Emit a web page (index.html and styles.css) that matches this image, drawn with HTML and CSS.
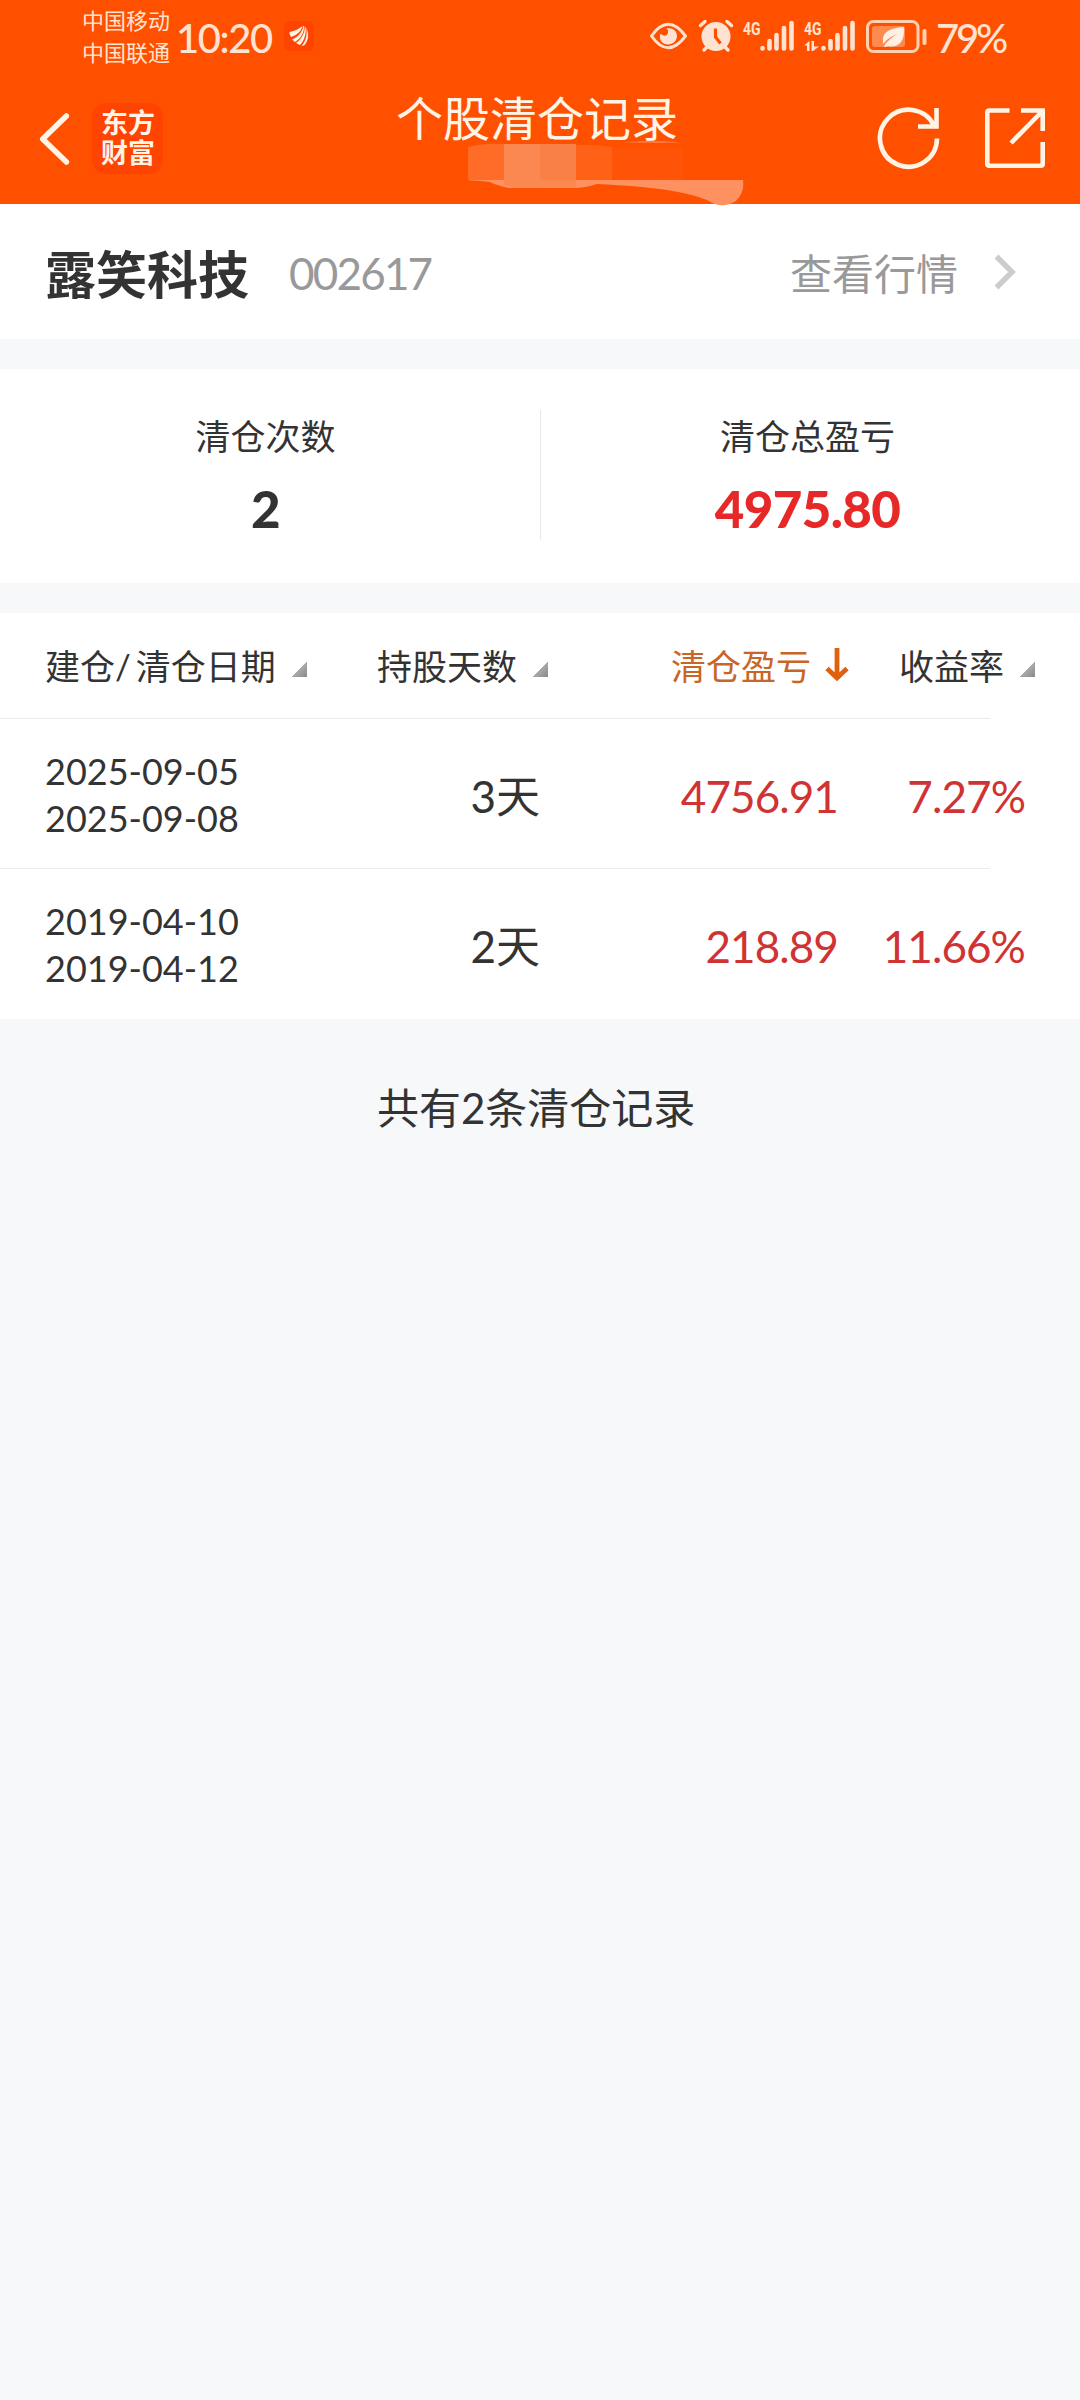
FILE: index.html
```html
<!DOCTYPE html>
<html lang="zh-CN">
<head>
<meta charset="utf-8">
<title>个股清仓记录</title>
<link rel="stylesheet" href="styles.css">
</head>
<body>
<header class="top">
  <div class="status">
    <div class="carriers"><span>中国移动</span><span>中国联通</span></div>
    <span class="clock">10:20</span>
    <svg class="app-badge" width="30" height="30" viewBox="0 0 30 30"><rect width="30" height="30" rx="6" fill="#ff4300"/><g fill="#fff4e6"><path d="M5.500 11C11 10 15 8 18.500 5C17.500 10 13 14 7 16C6 14.500 5.500 13 5.500 11Z"/><path d="M19.300 5C18.500 11 14 16 8 18.500L11 21C17 17.500 20 12 20 5Z"/><path d="M20.700 5.500C21 12 17.500 18 12 22L16 24C20.500 19.500 22.500 12 21.500 6Z"/><path d="M22.200 7C23.500 13 22 20 17.500 25L20 24.500C24.500 20 25.500 13 22.200 7Z"/></g></svg>
    <svg class="status-icons" width="280" height="40" viewBox="0 0 280 40">
      <path d="M2.500 21Q19 -2.500 36.500 21Q19 44.500 2.500 21Z" stroke-linejoin="round" fill="none" stroke="#ffe3d2" stroke-width="3"/>
      <path d="M17.500 13.500C21 16.500 18.500 21.500 14.500 20.500C13 20.100 12.300 19 11.300 19C9.500 25 13.500 29.500 19 29.500C24 29.500 28 25.500 28 21C28 15.500 23 12 17.500 13.500Z" fill="#ffe3d2"/>
      <g fill="#ffe3d2"><circle cx="67" cy="21.500" r="14.500"/><path d="M51.500 10.500L56 6.500M78 6.500L82.500 10.500M58 32L55 35M76 32L79 35" stroke="#ffe3d2" stroke-width="3.400" stroke-linecap="round"/></g>
      <path d="M66.500 13.500V22L71.500 28.500" fill="none" stroke="#ff5000" stroke-width="3.200"/>
      <g class="net"><text x="94" y="19.500" textLength="17.500" lengthAdjust="spacingAndGlyphs">4G</text><text x="155" y="19.500" textLength="17.500" lengthAdjust="spacingAndGlyphs">4G</text></g>
      <g stroke="#ffe3d2" stroke-width="4.600" stroke-linecap="round">
        <path d="M113.500 33V33.500M120.500 26V33.500M127.500 20V33.500M135 13V33.500M142.500 8V33.500"/>
        <path d="M174.500 33V33.500M181.500 26V33.500M188.500 20V33.500M196 13V33.500M203.500 8V33.500"/>
      </g>
      <path d="M155 30.500L160.500 26V36H158V30.500ZM162.500 26H165V31.500H170L164 36H162.500Z" fill="#ffe3d2"/>
      <rect x="218.500" y="6.500" width="50.500" height="30" rx="6" fill="none" stroke="#ffd0b0" stroke-width="3"/>
      <rect x="223" y="11" width="33" height="21" rx="3" fill="#ff8a50"/>
      <path d="M255 12C256 25 251 32 241 31.500C238.500 31.300 237.500 31 236.500 32L235 32C236 28 241 24 248 19C241 22 237 25 234.500 29C231.500 17 241 13 255 12Z" fill="#fff0e6"/>
      <rect x="273.500" y="14" width="4" height="16" rx="1.800" fill="#ffd0b0"/>
    </svg>
    <span class="percent">79%</span>
  </div>
  <nav class="nav">
    <svg class="back" width="34" height="56" viewBox="0 0 34 56"><path d="M29.400 5L5.700 28L29.400 51" fill="none" stroke="#fff4e6" stroke-width="5.500" stroke-linecap="round" stroke-linejoin="round"/></svg>
    <div class="logo"><span>东方</span><span>财富</span></div>
    <h1 class="title">个股清仓记录</h1>
    <svg class="refresh" width="66" height="66" viewBox="0 0 66 66"><path d="M61 33.500A28.500 28.500 0 1 1 58 20.500" fill="none" stroke="#fff4e6" stroke-width="4.600"/><path d="M60.500 3V21.500H42" fill="none" stroke="#fff4e6" stroke-width="4.600"/></svg>
    <svg class="share" width="64" height="64" viewBox="0 0 64 64"><path d="M26.500 4.500H6.300Q4.300 4.500 4.300 6.500V57.700Q4.300 59.700 6.300 59.700H57.700Q59.700 59.700 59.700 57.700V36M38 4.500H59.700V25M59 5.500L28 37" fill="none" stroke="#fff4e6" stroke-width="4.600"/></svg>
  </nav>
  <svg class="smudge" width="290" height="70" viewBox="0 0 290 70">
    <path d="M8 7Q24 3 44 4V41H10Q7 40 8 36Z" fill="#ff6c28"/>
    <path d="M44 4H80V48H52Q42 47 34 42L44 40Z" fill="#fa8850"/>
    <path d="M80 4H116V48H80Z" fill="#f98146"/>
    <path d="M116 5Q132 4 152 7V41H116Z" fill="#ff6117"/>
    <path d="M152 7H223V41H152Z" fill="#ff5407"/>
    <path d="M162 2.500Q192 -1 222 2.500L200 3Z" fill="#ff7a3c"/>
    <path d="M10 40H283Q285 52 276 61Q262 70 247 60Q232 54 207 50Q180 46 137 44Q125 48 114 48H50Q38 46 30 42Z" fill="#ff9060"/>
    <path d="M44 40H116V48H56Q46 46 44 44Z" fill="#fa8850"/>
  </svg>
</header>

<section class="stock">
  <h2 class="name">露笑科技</h2>
  <span class="code">002617</span>
  <a class="quote">查看行情</a>
  <svg class="chevron" width="22" height="36" viewBox="0 0 22 36"><path d="M2.500 2.500L18 18L2.500 33.500" fill="none" stroke="#ccc" stroke-width="5.500"/></svg>
</section>

<section class="summary">
  <div class="stat stat-count"><span class="label">清仓次数</span><strong class="value">2</strong></div>
  <div class="stat stat-total"><span class="label">清仓总盈亏</span><strong class="value red">4975.80</strong></div>
</section>

<section class="records">
  <div class="grid head">
    <div class="col-date">建仓/<span class="after-slash">清仓日期</span><i class="sort"></i></div>
    <div class="col-days-head">持股天数<i class="sort"></i></div>
    <div class="col-profit-head">清仓盈亏<svg class="arrow" width="24" height="34" viewBox="0 0 24 34"><path d="M12 0V29M2 20.500L12 30L22 20.500" fill="none" stroke="#e0600f" stroke-width="4.800"/></svg></div>
    <div class="col-rate-head">收益率<i class="sort"></i></div>
  </div>
  <div class="grid row">
    <div class="dates"><span>2025-09-05</span><span>2025-09-08</span></div>
    <div class="days">3天</div><div class="profit">4756.91</div><div class="rate">7.27%</div>
  </div>
  <div class="grid row">
    <div class="dates"><span>2019-04-10</span><span>2019-04-12</span></div>
    <div class="days">2天</div><div class="profit">218.89</div><div class="rate">11.66%</div>
  </div>
</section>
<p class="total">共有2条清仓记录</p>
</body>
</html>
```
FILE: styles.css
```css
* { box-sizing: border-box; }
body {
  margin: 0;
  min-height: 2400px;
  background: #f7f8fa;
  color: #333;
  font-family: Lato, "Noto Sans CJK SC", sans-serif;
}
h1, h2, p { margin: 0; font-weight: 400; }
svg { display: block; flex: none; }
span, a, h1, h2 { white-space: nowrap; }

.top { position: relative; height: 204px; background: #ff5000; color: #fff4e6; }
.status { display: flex; height: 80px; color: #ffe3d2; }
.carriers {
  display: flex; flex-direction: column; width: 94px; margin-left: 82px; padding-top: 5px;
  font-size: 22px; line-height: 32px;
}
.clock {
  width: 108px; padding-top: 14px;
  font-size: 40px; line-height: 48px; font-weight: 500; letter-spacing: -1.400px;
}
.app-badge { margin-top: 21px; }
.status-icons { margin: 15px 0 0 335px; }
.net { fill: #ffe3d2; font: 700 19px Roboto, sans-serif; }
.percent {
  margin-left: 7px; padding-top: 14px;
  font-size: 40px; line-height: 48px; font-weight: 500; letter-spacing: -3.200px;
}

.nav { display: flex; height: 124px; }
.back { margin: 31px 0 0 37px; }
.logo {
  display: flex; flex-direction: column; width: 71px; height: 71px; margin: 23px 0 0 21px;
  padding: 5px 0 0 9px; border-radius: 14px; background: #ff4300;
  font-size: 27px; line-height: 30px; font-weight: 700;
}
.title { width: 480px; margin: 6px 0 0 233px; font-size: 47px; line-height: 64px; }
.refresh { margin: 25px 0 0 0; }
.share { margin: 26px 0 0 41px; }
.smudge { position: absolute; left: 460px; top: 140px; }

.stock { display: flex; align-items: center; height: 135px; padding: 0 64px 0 45px; background: #fff; }
.name { font-size: 51px; font-weight: 700; }
.code { margin: 3px 0 0 40px; color: #999; font-size: 44px; letter-spacing: -1.800px; }
.quote { margin-left: auto; color: #999; font-size: 42px; }
.chevron { margin-left: 36px; }

.summary { display: flex; height: 214px; margin-top: 30px; padding-top: 41px; background: #fff; }
.stat { display: flex; flex-direction: column; align-items: center; height: 130px; width: 50%; }
.stat-count { width: 541px; padding-right: 9px; border-right: 1px solid #e8e8e8; }
.stat-total { width: 539px; padding-right: 6px; }
.label { font-size: 35px; line-height: 52px; }
.value { margin-top: 14px; font-size: 51px; line-height: 66px; font-weight: 900; letter-spacing: -.600px; }
.red { color: #e62828; }

.records { margin-top: 30px; background: #fff; }
.grid { display: grid; padding-left: 45px; }
.head {
  grid-template-columns: 332px 294px 228px 180px; height: 106px; align-items: center;
  font-size: 35px; line-height: 52px;
}
.head > div { display: flex; align-items: center; white-space: nowrap; }
.after-slash { margin-left: 5px; }
.sort { width: 15px; height: 16px; margin: 6px 0 0 16px; background: linear-gradient(135deg, transparent 49%, #aaa 51%, #888); }
.col-profit-head { color: #c96526; }
.arrow { margin: -2px 0 0 14px; }
.head, .row:not(:last-child) { background: linear-gradient(#ebebeb, #ebebeb) left bottom / 990px 1px no-repeat; }
.row { grid-template-columns: 300px 195px 298px 187px; height: 150px; align-items: center; font-size: 44px; }
.dates { display: flex; flex-direction: column; padding-top: 2px; font-size: 36px; line-height: 47px; }
.days, .profit, .rate { text-align: right; }
.profit, .rate { padding-top: 3px; color: #cf3333; letter-spacing: -.900px; }
.total { margin-top: 57px; padding-left: 377px; font-size: 42px; line-height: 64px; }
```
